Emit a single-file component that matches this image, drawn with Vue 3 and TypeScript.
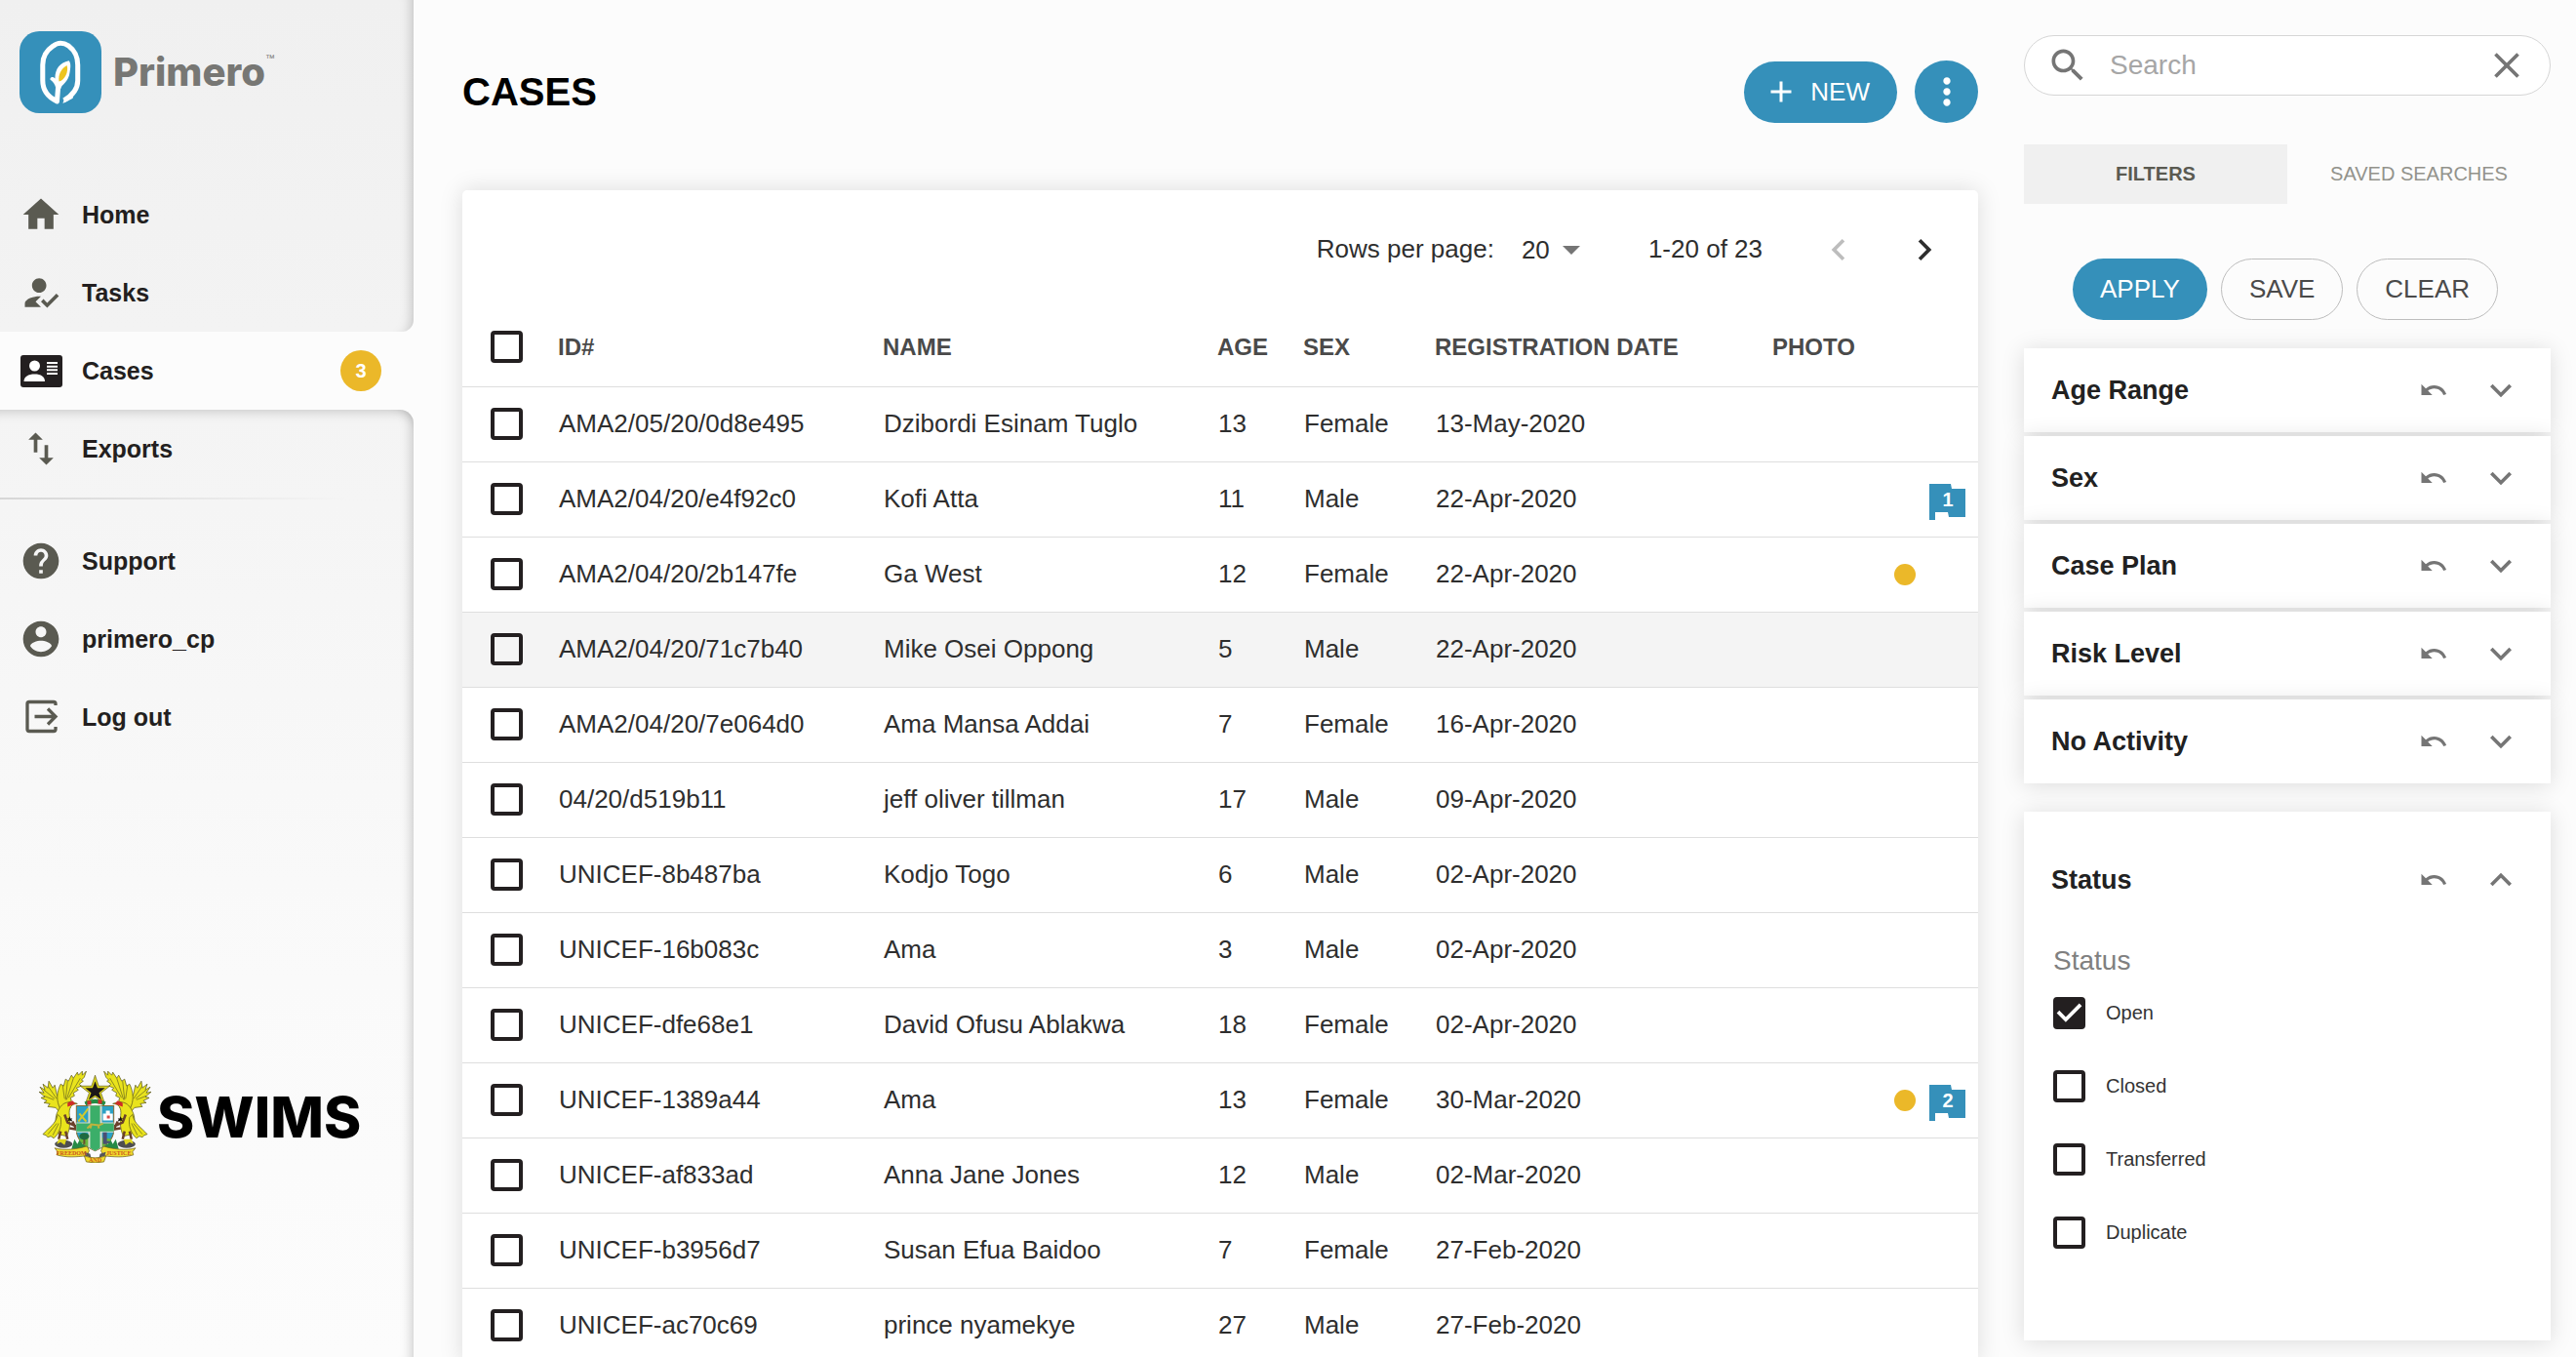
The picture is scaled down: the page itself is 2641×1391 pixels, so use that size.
<script setup lang="ts">
import { ref } from 'vue'

interface CaseRow {
  id: string
  name: string
  age: number
  sex: string
  date: string
  alert?: boolean
  flags?: number
}

const rows: CaseRow[] = [
  { id: 'AMA2/05/20/0d8e495', name: 'Dzibordi Esinam Tuglo', age: 13, sex: 'Female', date: '13-May-2020' },
  { id: 'AMA2/04/20/e4f92c0', name: 'Kofi Atta', age: 11, sex: 'Male', date: '22-Apr-2020', flags: 1 },
  { id: 'AMA2/04/20/2b147fe', name: 'Ga West', age: 12, sex: 'Female', date: '22-Apr-2020', alert: true },
  { id: 'AMA2/04/20/71c7b40', name: 'Mike Osei Oppong', age: 5, sex: 'Male', date: '22-Apr-2020' },
  { id: 'AMA2/04/20/7e064d0', name: 'Ama Mansa Addai', age: 7, sex: 'Female', date: '16-Apr-2020' },
  { id: '04/20/d519b11', name: 'jeff oliver tillman', age: 17, sex: 'Male', date: '09-Apr-2020' },
  { id: 'UNICEF-8b487ba', name: 'Kodjo Togo', age: 6, sex: 'Male', date: '02-Apr-2020' },
  { id: 'UNICEF-16b083c', name: 'Ama', age: 3, sex: 'Male', date: '02-Apr-2020' },
  { id: 'UNICEF-dfe68e1', name: 'David Ofusu Ablakwa', age: 18, sex: 'Female', date: '02-Apr-2020' },
  { id: 'UNICEF-1389a44', name: 'Ama', age: 13, sex: 'Female', date: '30-Mar-2020', alert: true, flags: 2 },
  { id: 'UNICEF-af833ad', name: 'Anna Jane Jones', age: 12, sex: 'Male', date: '02-Mar-2020' },
  { id: 'UNICEF-b3956d7', name: 'Susan Efua Baidoo', age: 7, sex: 'Female', date: '27-Feb-2020' },
  { id: 'UNICEF-ac70c69', name: 'prince nyamekye', age: 27, sex: 'Male', date: '27-Feb-2020' },
]

const hoveredId = ref('AMA2/04/20/71c7b40')
const selected = ref<string[]>([])
const pageSize = ref('20')
const query = ref('')

const panels = ['Age Range', 'Sex', 'Case Plan', 'Risk Level', 'No Activity']
const statuses = ['Open', 'Closed', 'Transferred', 'Duplicate']
const chosen = ref<string[]>(['Open'])

const undoPath =
  'M12.5 8c-2.65 0-5.05.99-6.9 2.6L2 7v9h9l-3.62-3.62c1.39-1.16 3.16-1.88 5.12-1.88 3.54 0 6.55 2.31 7.6 5.5l2.37-.78C21.08 11.03 17.15 8 12.5 8z'
</script>

<template>
  <div class="page">
    <aside class="sidebar">
      <div class="pane pane-top">
        <div class="brand">
          <svg class="brand-mark" viewBox="0 0 83 83" aria-hidden="true">
            <rect width="83" height="83" rx="20" fill="#3590ba" />
            <path
              d="M45 70C54 65 59 59 59 50V34C59 23 54 18 50 15C44 11 39 11 34 15C28 19 23.500 25 23.500 34V50C23.500 59 27 66 38 71L39.500 52"
              fill="none" stroke="#fff" stroke-width="5" stroke-linejoin="round" />
            <path d="M44 73C45 68 48 65 55 62L54 68Z" fill="#fff" />
            <path d="M50 30C41 32 36 38 36 48C33 45 31 47 31 49C34 51 36 54 37 58L42 58C42 54 50 52 51 41C52 36 52 32 50 30Z" fill="#fff" />
            <path d="M48 34.500C42 38 39 44 40 51C46 49 50 41 48 34.500Z" fill="#ecc41f" />
          </svg>
          <span class="brand-name">Primero</span><span class="brand-tm">™</span>
        </div>
        <nav>
          <a class="nav-item" href="#home">
            <svg viewBox="0 0 24 24"><path d="M10 20v-6h4v6h5v-8h3L12 3 2 12h3v8z" /></svg>
            <span>Home</span>
          </a>
          <a class="nav-item" href="#tasks">
            <svg viewBox="0 0 24 24"><path d="M9 17l3-2.940c-.39-.04-.68-.06-1-.06-2.670 0-8 1.340-8 4v2h9l-3-3zm2-5c2.210 0 4-1.790 4-4s-1.790-4-4-4-4 1.790-4 4 1.790 4 4 4zm4.470 8.500L12 17l1.400-1.410 2.070 2.080 5.130-5.170 1.400 1.410z" /></svg>
            <span>Tasks</span>
          </a>
        </nav>
      </div>

      <a class="nav-item active" href="#cases" aria-current="page">
        <svg viewBox="0 0 44 44">
          <rect x="1" y="6" width="43" height="33" rx="3" fill="#231f20" />
          <circle cx="15.500" cy="17" r="5.500" fill="#fff" />
          <path d="M4.500 33C4.500 28 9 25.500 15.500 25.500S26 28 26 33Z" fill="#fff" />
          <path d="M28 14h11M28 17.700h11M28 21.300h11M28 25h11" stroke="#fff" stroke-width="2" />
        </svg>
        <span>Cases</span>
        <span class="badge">3</span>
      </a>

      <div class="pane pane-bottom">
        <nav>
          <a class="nav-item" href="#exports">
            <svg viewBox="0 0 24 24"><path d="M9 3L5 6.990h3V14h2V6.990h3L9 3zm7 14.010V10h-2v7.010h-3L15 21l4-3.990h-3z" /></svg>
            <span>Exports</span>
          </a>
          <div class="divider"></div>
          <a class="nav-item" href="#support">
            <svg viewBox="0 0 24 24"><path d="M12 2C6.480 2 2 6.480 2 12s4.480 10 10 10 10-4.480 10-10S17.520 2 12 2zm1 17h-2v-2h2v2zm2.070-7.750l-.9.920C13.450 12.900 13 13.500 13 15h-2v-.5c0-1.100.45-2.100 1.170-2.830l1.240-1.260c.37-.36.59-.86.59-1.410 0-1.100-.9-2-2-2s-2 .9-2 2H8c0-2.210 1.790-4 4-4s4 1.790 4 4c0 .88-.36 1.680-.93 2.250z" /></svg>
            <span>Support</span>
          </a>
          <a class="nav-item" href="#account">
            <svg viewBox="0 0 24 24"><path d="M12 2C6.480 2 2 6.480 2 12s4.480 10 10 10 10-4.480 10-10S17.520 2 12 2zm0 3c1.660 0 3 1.340 3 3s-1.340 3-3 3-3-1.340-3-3 1.340-3 3-3zm0 14.200c-2.500 0-4.710-1.280-6-3.220.03-1.990 4-3.080 6-3.080 1.990 0 5.970 1.090 6 3.080-1.290 1.940-3.500 3.220-6 3.220z" /></svg>
            <span>primero_cp</span>
          </a>
          <a class="nav-item" href="#logout">
            <svg viewBox="0 0 44 44" class="stroked"><path d="M37 10V8.500a2 2 0 0 0-2-2H10a2 2 0 0 0-2 2v26a2 2 0 0 0 2 2h25a2 2 0 0 0 2-2V32M15.500 21.500H37M29 13.500l8 8-8 8" /></svg>
            <span>Log out</span>
          </a>
        </nav>

        <div class="agency">
          <svg class="crest" viewBox="0 0 114 94" aria-hidden="true">
            <g v-for="side in [0, 1]" :key="side" :transform="side ? 'translate(114 0) scale(-1 1)' : undefined">
              <g fill="#e9e31c" stroke="#55531a" stroke-width="0.700" stroke-linejoin="round">
                <path d="M22 44L17 38L9 37L11 34L5 33L8 31L2 28L6 27L0 22L5 23L1 17L6 20L4 14L9 18L10 11L14 18L16 15L18 24L21 31L26 40Z" />
                <path d="M22 40C17 31 18 22 22 14L25 16L27 9L30 11L33 5L35 8L39 2L40 5L44 1L44 5L48 1L46 7L43 10L45 11L41 14L43 16L38 18L40 20L35 23L36 26L32 28L33 31L30 33L32 38Z" />
                <path d="M20 40C25 30 34 32 39 34C33 34 30 38 31 46C32 54 31 62 28 67L20 65C17 56 15 48 20 40Z" />
                <path d="M19 45C17 55 10 58 4 65L7 66L9 68L12 67L15 69L18 66C22 60 23 54 22 48Z" />
              </g>
              <path d="M5 26L15 30M5 20L16 29M9 16L18 29M24 15L26 29M29 11L27 30M35 8L28 30M42 8L30 28M9 65L18 54M14 66L20 54" stroke="#77751d" stroke-width="0.800" />
              <path d="M29 37L37 34L34 31L29 33Z" fill="#cf2b27" />
              <path d="M26 45L29 53L38 57M22 62L20 70M27 62L29 70M34 52L38 60L31 59" stroke="#6a402b" stroke-width="2.500" fill="none" />
              <ellipse cx="25" cy="75" rx="9" ry="4" fill="#4d4d50" />
              <path d="M20 70L18 75L22 73L26 76L28 70Z" fill="#ddd51f" />
              <path d="M33 80L36 70L39 75L42 69L44 75L48 72L50 80Z" fill="#258a46" />
              <path d="M16 79C25 82 40 80 49 77L51 82L48 87C38 88 28 89 18 86L19 83Z" fill="#f1dd2d" stroke="#6c5d13" stroke-width="0.700" />
              <path d="M46 83L52 85L53 89L47 87Z" fill="#57575a" />
              <path d="M31 47l1 2h2l-1 1 1 2-3-1-2 1 1-2-2-1h2z" fill="#17130f" />
            </g>
            <path d="M57 5L60.600 16L72 16L63 23L67 34L57 27L47 34L51 23L42 16L53.400 16Z" fill="#dcd51c" stroke="#554f11" stroke-width="0.600" />
            <path d="M57 11L59.500 18L67 18L61 23L63.500 30L57 25.500L50.500 30L53 23L47 18L54.500 18Z" fill="#1c1719" />
            <path d="M47 34Q57 29 67 34" fill="none" stroke="#238c44" stroke-width="4" />
            <path d="M49 33h4M60 32h4" stroke="#d12d28" stroke-width="4" />
            <path d="M38 36H76V61C76 72 66 78 57 82C48 78 38 72 38 61Z" fill="#2ba1c5" stroke="#866b35" stroke-width="1" />
            <path d="M40 70Q57 66 74 70Q68 77 57 81Q46 77 40 70Z" fill="#6cb83c" />
            <path d="M50 36H64V53H76V63H64V78L57 82L50 78V63H38V53H50Z" fill="#d6dccf" />
            <path d="M52 36H62V54H76V62H62V79L57 82L52 79V62H38V54H52Z" fill="#3bae69" />
            <path d="M40 52L50 39M41 44L48 52" stroke="#d1c92f" stroke-width="2" />
            <path d="M65 51V44H68V41H72V44H75V51Z" fill="#fff" /><path d="M69 46h3v3h-3z" fill="#d74b46" />
            <path d="M49 59L53 55L61 56L65 54M52 59L53 56M61 59L60 56" stroke="#c0b33d" stroke-width="2" fill="none" />
            <path d="M46 68V75" stroke="#684d30" stroke-width="2" /><ellipse cx="46" cy="67" rx="5" ry="3.500" fill="#1e6a40" />
            <path d="M66 75V64h2v11M68 73h4" stroke="#4a4e73" stroke-width="2" fill="none" />
            <path d="M46 87Q57 91 68 87L66 93Q57 95 48 93Z" fill="#f1dd2d" stroke="#6c5d13" stroke-width="0.700" />
            <g fill="#c9531d" class="motto">
              <text x="33" y="86" text-anchor="middle">FREEDOM</text>
              <text x="57" y="93" text-anchor="middle">AND</text>
              <text x="81" y="86" text-anchor="middle">JUSTICE</text>
            </g>
          </svg>
          <span class="agency-name">SWIMS</span>
        </div>
      </div>
    </aside>

    <main class="content">
      <header class="heading">
        <h1>CASES</h1>
        <button type="button" class="btn primary new">
          <svg viewBox="0 0 24 24"><path d="M19 13h-6v6h-2v-6H5v-2h6V5h2v6h6v2z" /></svg>
          NEW
        </button>
        <button type="button" class="more" aria-label="More actions">
          <svg viewBox="0 0 24 24"><path d="M12 8c1.100 0 2-.9 2-2s-.9-2-2-2-2 .9-2 2 .9 2 2 2zm0 2c-1.100 0-2 .9-2 2s.9 2 2 2 2-.9 2-2-.9-2-2-2zm0 6c-1.100 0-2 .9-2 2s.9 2 2 2 2-.9 2-2-.9-2-2-2z" /></svg>
        </button>
      </header>

      <section class="card">
        <div class="pager">
          <label for="page-size">Rows per page:</label>
          <div class="size">
            <select id="page-size" v-model="pageSize">
              <option>20</option>
              <option>50</option>
              <option>75</option>
            </select>
            <svg viewBox="0 0 18 10" aria-hidden="true"><path d="M0 0h18L9 9z" /></svg>
          </div>
          <span class="range">1-20 of 23</span>
          <button type="button" class="step" disabled aria-label="Previous page">
            <svg viewBox="0 0 24 24"><path d="M15.410 7.410L14 6l-6 6 6 6 1.410-1.410L10.830 12z" /></svg>
          </button>
          <button type="button" class="step" aria-label="Next page">
            <svg viewBox="0 0 24 24"><path d="M10 6L8.590 7.410 13.170 12l-4.580 4.590L10 18l6-6z" /></svg>
          </button>
        </div>

        <table>
          <colgroup>
            <col class="c-check" /><col class="c-id" /><col class="c-name" /><col class="c-age" />
            <col class="c-sex" /><col class="c-date" /><col class="c-photo" />
          </colgroup>
          <thead>
            <tr>
              <th class="check"><input type="checkbox" aria-label="Select all cases" /></th>
              <th>ID#</th>
              <th>NAME</th>
              <th>AGE</th>
              <th>SEX</th>
              <th>REGISTRATION DATE</th>
              <th>PHOTO</th>
            </tr>
          </thead>
          <tbody>
            <tr v-for="row in rows" :key="row.id" :class="{ hovered: row.id === hoveredId }" @mouseenter="hoveredId = row.id">
              <td class="check"><input v-model="selected" type="checkbox" :value="row.id" :aria-label="'Select ' + row.id" /></td>
              <td>{{ row.id }}</td>
              <td>{{ row.name }}</td>
              <td>{{ row.age }}</td>
              <td>{{ row.sex }}</td>
              <td>{{ row.date }}</td>
              <td>
                <div class="marks">
                  <span v-if="row.alert" class="dot"></span>
                  <span class="flag-slot">
                    <svg v-if="row.flags" viewBox="0 0 37 37">
                      <path d="M0 0H22L23 5H37V34H20L19 29H6V37H0Z" fill="#3590ba" />
                      <text x="19" y="23" text-anchor="middle" fill="#fff">{{ row.flags }}</text>
                    </svg>
                  </span>
                </div>
              </td>
            </tr>
          </tbody>
        </table>
      </section>
    </main>

    <section class="filters">
      <form class="search" @submit.prevent>
        <svg viewBox="0 0 24 24" aria-hidden="true"><path d="M15.500 14h-.79l-.28-.27C15.410 12.590 16 11.110 16 9.500 16 5.910 13.090 3 9.500 3S3 5.910 3 9.500 5.910 16 9.500 16c1.610 0 3.090-.59 4.230-1.570l.27.28v.79l5 4.990L20.490 19l-4.990-5zm-6 0C7.010 14 5 11.990 5 9.500S7.010 5 9.500 5 14 7.010 14 9.500 11.990 14 9.500 14z" /></svg>
        <input v-model="query" type="text" placeholder="Search" aria-label="Search" />
        <button type="button" aria-label="Clear search" @click="query = ''">
          <svg viewBox="0 0 24 24"><path d="M19 6.410L17.590 5 12 10.590 6.410 5 5 6.410 10.590 12 5 17.590 6.410 19 12 13.410 17.590 19 19 17.590 13.410 12z" /></svg>
        </button>
      </form>

      <div class="tabs" role="tablist">
        <button type="button" role="tab" aria-selected="true" class="tab current">FILTERS</button>
        <button type="button" role="tab" aria-selected="false" class="tab">SAVED SEARCHES</button>
      </div>

      <div class="actions">
        <button type="button" class="btn primary">APPLY</button>
        <button type="button" class="btn">SAVE</button>
        <button type="button" class="btn">CLEAR</button>
      </div>

      <div class="panels">
        <div v-for="panel in panels" :key="panel" class="panel">
          <h2>{{ panel }}</h2>
          <button type="button" class="icon" :aria-label="'Reset ' + panel">
            <svg class="undo" viewBox="0 0 24 24"><path :d="undoPath" /></svg>
          </button>
          <button type="button" class="icon" :aria-label="'Expand ' + panel">
            <svg class="chevron" viewBox="0 0 24 24"><path d="M16.590 8.590L12 13.170 7.410 8.590 6 10l6 6 6-6z" /></svg>
          </button>
        </div>
      </div>

      <div class="status">
        <div class="panel">
          <h2>Status</h2>
          <button type="button" class="icon" aria-label="Reset Status">
            <svg class="undo" viewBox="0 0 24 24"><path :d="undoPath" /></svg>
          </button>
          <button type="button" class="icon" aria-label="Collapse Status">
            <svg class="chevron" viewBox="0 0 24 24"><path d="M12 8l-6 6 1.410 1.410L12 10.830l4.590 4.580L18 14z" /></svg>
          </button>
        </div>
        <fieldset>
          <legend>Status</legend>
          <label v-for="item in statuses" :key="item">
            <input v-model="chosen" type="checkbox" :value="item" />
            {{ item }}
          </label>
        </fieldset>
      </div>
    </section>
  </div>
</template>

<style>
body {
  background: #fcfcfc;
}
</style>

<style scoped>
.page {
  display: flex;
  height: 100vh;
  overflow: hidden;
  background: #fcfcfc;
  color: #2e2e2e;
  font-family: "Liberation Sans", Arial, sans-serif;
  font-size: 26px;
}

.page *,
.page *::before,
.page *::after {
  box-sizing: border-box;
}

button,
input,
select {
  font: inherit;
  color: inherit;
}

button {
  padding: 0;
  border: 0;
  background: none;
  cursor: pointer;
}

svg {
  display: block;
  flex: none;
  fill: currentColor;
}

/* Sidebar */
.sidebar {
  display: flex;
  flex: none;
  flex-direction: column;
  width: 424px;
}

.pane-top {
  background: linear-gradient(#f0f0f0, #f3f3f3);
  border-bottom-right-radius: 12px;
  box-shadow: inset -14px 0 14px -14px rgba(0, 0, 0, 0.26);
}

.pane-bottom {
  display: flex;
  flex: 1;
  flex-direction: column;
  background: linear-gradient(#f4f4f4, #fafafa 60%, #fcfcfc);
  border-top-right-radius: 14px;
  box-shadow:
    inset -14px 0 14px -14px rgba(0, 0, 0, 0.26),
    inset 0 14px 14px -14px rgba(0, 0, 0, 0.24);
}

.brand {
  display: flex;
  align-items: center;
  height: 148px;
  margin-bottom: 32px;
  padding-left: 20px;
}

.brand-mark {
  width: 84px;
  height: 84px;
}

.brand-name {
  margin-left: 12px;
  color: #777774;
  font-family: Inter, sans-serif;
  font-size: 40px;
  font-weight: 800;
  line-height: 48px;
}

.brand-tm {
  align-self: flex-start;
  margin-top: 52px;
  color: #777774;
  font-size: 10px;
  line-height: 16px;
}

.nav-item {
  display: flex;
  align-items: center;
  gap: 20px;
  height: 80px;
  padding: 0 33px 0 20px;
  color: #231f20;
  font-size: 25px;
  font-weight: 700;
  text-decoration: none;
}

.nav-item svg {
  width: 44px;
  height: 44px;
  color: #5a5a51;
}

.nav-item .stroked {
  fill: none;
  stroke: currentColor;
  stroke-width: 3.3;
}

.badge {
  width: 42px;
  height: 42px;
  margin-left: auto;
  border-radius: 50%;
  background: #ebb829;
  color: #fff;
  font-size: 20px;
  line-height: 42px;
  text-align: center;
}

.divider {
  height: 2px;
  margin: 10px 0 23px;
  background: linear-gradient(90deg, #d6d6d6, rgba(214, 214, 214, 0) 84%);
}

.agency {
  display: flex;
  align-items: center;
  gap: 6px;
  margin-top: auto;
  padding: 0 0 199px 40px;
}

.crest {
  width: 115px;
  height: 95px;
}

.motto {
  font-family: "Liberation Serif", serif;
  font-size: 6px;
  font-weight: 700;
}

.agency-name {
  color: #000;
  font-family: Inter, sans-serif;
  font-size: 58px;
  font-weight: 800;
  line-height: 64px;
}

/* Case list */
.content {
  flex: 1;
  min-width: 0;
  padding: 62px 47px 0 50px;
}

.heading {
  display: flex;
  align-items: center;
  gap: 18px;
  height: 64px;
  margin-bottom: 69px;
}

h1 {
  flex: 1;
  margin: 0;
  color: #000;
  font-size: 40px;
  line-height: 48px;
}

.btn {
  display: flex;
  align-items: center;
  height: 63px;
  padding: 0 28px;
  border: 1px solid #bdbdbd;
  border-radius: 32px;
  color: #4a4a4a;
}

.btn.primary {
  border: 0;
  background: #3590ba;
  color: #fff;
}

.btn.new {
  gap: 12px;
  padding-left: 20px;
}

.new svg {
  width: 36px;
  height: 36px;
}

.more {
  display: grid;
  place-items: center;
  width: 65px;
  height: 64px;
  border-radius: 50%;
  background: #3590ba;
  color: #fff;
}

.more svg,
.step svg,
.chevron {
  width: 44px;
  height: 44px;
}

.card {
  border-radius: 5px;
  background: #fff;
  box-shadow: 0 0 24px rgba(0, 0, 0, 0.13);
}

.pager {
  display: flex;
  align-items: center;
  justify-content: flex-end;
  height: 121px;
  padding-right: 33px;
}

.size {
  position: relative;
  margin: 0 70px 0 28px;
}

.size select {
  display: block;
  width: 60px;
  padding: 0;
  border: 0;
  background: none;
  appearance: none;
}

.size svg {
  position: absolute;
  top: 50%;
  right: 0;
  width: 18px;
  height: 10px;
  margin-top: -4px;
  color: #757575;
  pointer-events: none;
}

.range {
  margin-right: 56px;
}

.step + .step {
  margin-left: 44px;
}

.step:disabled {
  color: #bdbdbd;
}

table {
  width: 100%;
  border-collapse: collapse;
  table-layout: fixed;
}

.c-check { width: 98px; }
.c-id { width: 333px; }
.c-name { width: 343px; }
.c-age { width: 88px; }
.c-sex { width: 135px; }
.c-date { width: 346px; }
.c-photo { width: 211px; }

th,
td {
  padding: 0;
  border-bottom: 1px solid #dedede;
  text-align: left;
  white-space: nowrap;
}

th {
  height: 80px;
  color: #4a4a4a;
  font-size: 24px;
}

td {
  height: 77px;
  padding-left: 1px;
}

.hovered td {
  background: #f4f4f4;
}

.check {
  padding-left: 29px;
}

input[type="checkbox"] {
  display: block;
  position: relative;
  flex: none;
  width: 33px;
  height: 33px;
  margin: 0;
  border: 4px solid #231f20;
  border-radius: 4px;
  appearance: none;
}

input[type="checkbox"]:checked {
  background: #231f20;
}

input[type="checkbox"]:checked::after {
  position: absolute;
  inset: -4px;
  background: #fff;
  clip-path: polygon(39% 78%, 11% 50%, 19% 42%, 39% 62%, 81% 20%, 89% 28%);
  content: "";
}

.marks {
  display: flex;
  align-items: center;
  justify-content: flex-end;
  gap: 14px;
  padding-right: 13px;
}

.dot {
  width: 22px;
  height: 22px;
  border-radius: 50%;
  background: #ebb829;
}

.flag-slot {
  width: 37px;
  height: 37px;
  margin-top: 4px;
  margin-bottom: -1px;
}

.flag-slot svg {
  width: 37px;
  height: 37px;
  font-size: 20px;
  font-weight: 700;
}

/* Filters */
.filters {
  flex: none;
  width: 540px;
  margin-right: 26px;
  padding-top: 36px;
}

.search {
  display: flex;
  align-items: center;
  height: 62px;
  padding: 0 22px;
  border: 1px solid #d6d6d6;
  border-radius: 31px;
  background: #fff;
  color: #757575;
}

.search svg {
  width: 44px;
  height: 44px;
}

.search input {
  flex: 1;
  min-width: 0;
  margin-left: 21px;
  padding: 0;
  border: 0;
  outline: 0;
  background: none;
  color: #231f20;
  font-size: 28px;
}

.search input::placeholder {
  color: #a6a6a6;
  opacity: 1;
}

.tabs {
  display: flex;
  margin-top: 50px;
}

.tab {
  flex: 1;
  height: 61px;
  color: #93938c;
  font-size: 20px;
}

.tab.current {
  background: #f0f0f0;
  color: #5a5a51;
  font-weight: 700;
}

.actions {
  display: flex;
  justify-content: center;
  gap: 14px;
  margin: 56px 4px 29px 0;
}

.panels {
  display: flex;
  flex-direction: column;
  gap: 4px;
}

.panel {
  display: flex;
  align-items: center;
  gap: 32px;
  height: 86px;
  padding: 0 29px 0 28px;
}

.panels .panel,
.status {
  background: #fff;
  box-shadow: 0 2px 22px rgba(0, 0, 0, 0.13);
}

h2 {
  flex: 1;
  margin: 0;
  color: #212121;
  font-size: 27px;
  line-height: 32px;
}

.icon {
  color: #757575;
}

.undo {
  width: 30px;
  height: 30px;
}

.status {
  height: 542px;
  margin-top: 29px;
  padding-top: 27px;
}

fieldset {
  margin: 0;
  padding: 0 30px;
  border: 0;
}

legend {
  height: 56px;
  padding: 24px 0 0;
  color: #808080;
  font-size: 28px;
  line-height: 32px;
}

fieldset label {
  display: flex;
  align-items: center;
  gap: 21px;
  height: 75px;
  color: #333;
  font-size: 20px;
}
</style>
